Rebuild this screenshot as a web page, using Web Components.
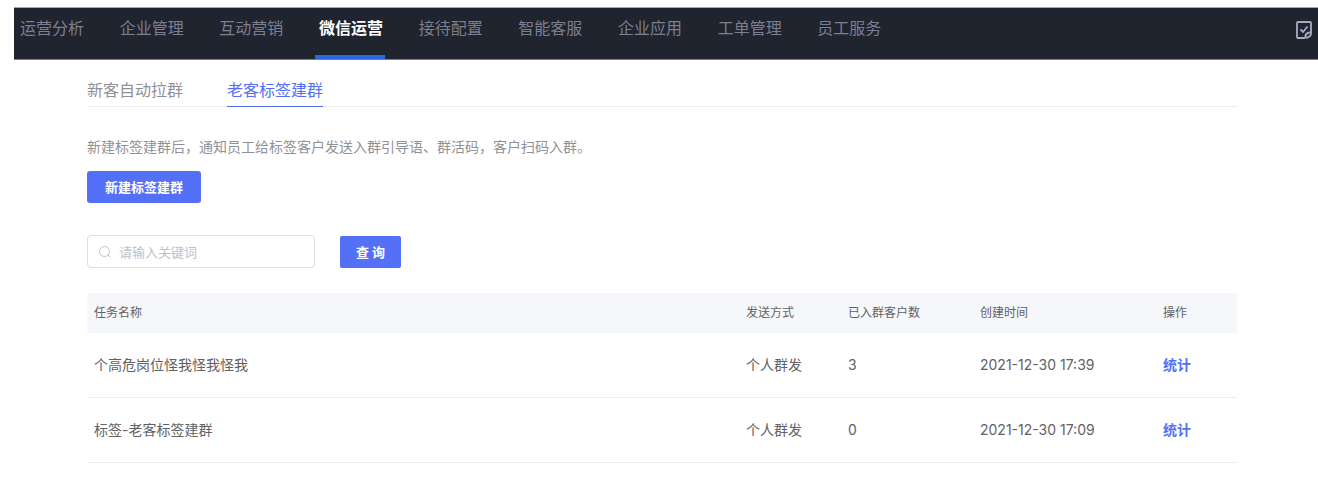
<!DOCTYPE html>
<html lang="zh-CN">
<head>
<meta charset="utf-8">
<meta name="viewport" content="width=device-width, initial-scale=1">
<title>老客标签建群</title>
<style>
  body {
    margin: 0;
    background: #fff;
    color: #606266;
    font: 14px/20px Inter, "Noto Sans CJK SC", sans-serif;
  }
</style>
</head>
<body>
<group-page></group-page>

<script>
  // barra superior
  class TopNav extends HTMLElement {
    constructor() {
      super();
      this.attachShadow({ mode: 'open' });
      this.shadowRoot.innerHTML = `
        <style>
          :host {
            display: flex;
            justify-content: space-between;
            height: 53px;
            padding: 0 5px 0 2px;
            background: #20242f;
            border-top: 1px solid #a6a7ac;
            border-bottom: 1px solid #7b7e86;
            box-sizing: border-box;
          }
          nav {
            display: grid;
            grid-template-columns: repeat(9, 1fr);
            width: 897px;
          }
          button {
            padding: 12px 0 0;
            border: 0;
            background: none;
            color: #a5acc4;
            align-self: start;
          }
          svg {
            display: block;
          }
        </style>
        <nav><slot></slot></nav>
        <button type="button" aria-label="待办"><svg width="18" height="20" viewBox="0 0 18 20" fill="none" stroke="currentColor" stroke-width="1.800" stroke-linejoin="round">
          <path d="M10 18H3Q2 18 2 17V3Q2 2 3 2H15Q16 2 16 3V13Q16 16 13.500 17Q11 18.500 10.500 17Q10 14 13 12.800Q15.500 12 16 13"/>
          <path d="M5.500 9.500L8 12L12.500 6.500"/>
        </svg></button>
      `;
    }
  }

  class NavItem extends HTMLElement {
    constructor() {
      super();
      this.attachShadow({ mode: 'open' });
      this.shadowRoot.innerHTML = `
        <style>
          :host {
            display: flex;
          }
          a {
            height: 51px;
            box-sizing: border-box;
            padding: 8px 2px 0 4px;
            border-bottom: 4px solid transparent;
            color: #7c7f91;
            font-size: 16px;
            line-height: 24px;
            white-space: nowrap;
            text-decoration: none;
          }
          :host([active]) a {
            border-color: #2b65e8;
            color: #fff;
            font-weight: 700;
          }
        </style>
        <a href="#"><slot></slot></a>
      `;
    }
  }

  class TabLink extends HTMLElement {
    constructor() {
      super();
      this.attachShadow({ mode: 'open' });
      this.shadowRoot.innerHTML = `
        <style>
          :host {
            display: block;
            margin-bottom: -1px;
          }
          a {
            display: block;
            padding-bottom: 4px;
            border-bottom: 1px solid transparent;
            color: #8f9198;
            font-size: 16px;
            line-height: 24px;
            text-decoration: none;
          }
          :host([active]) a {
            border-color: #5370f5;
            color: #5370f5;
          }
        </style>
        <a href="#"><slot></slot></a>
      `;
    }
  }

  class PrimaryButton extends HTMLElement {
    constructor() {
      super();
      this.attachShadow({ mode: 'open' });
      this.shadowRoot.innerHTML = `
        <style>
          :host {
            display: block;
          }
          button {
            display: block;
            height: 32px;
            padding: 0 18px;
            border: 0;
            border-radius: 3px;
            background: #5370f7;
            color: #fff;
            font: inherit;
            font-size: 13px;
            font-weight: 700;
            line-height: 20px;
          }
          :host([compact]) button {
            padding: 0 16px;
            border-radius: 2px;
          }
        </style>
        <button type="button"><slot></slot></button>
      `;
    }
  }

  class SearchBox extends HTMLElement {
    constructor() {
      super();
      this.attachShadow({ mode: 'open' });
      this.shadowRoot.innerHTML = `
        <style>
          :host {
            display: block;
            width: 228px;
          }
          label {
            display: flex;
            align-items: center;
            gap: 8px;
            height: 33px;
            padding: 0 10px;
            border: 1px solid #dcdfe6;
            border-radius: 4px;
            box-sizing: border-box;
            color: #c0c4cc;
          }
          input {
            flex: 1;
            min-width: 0;
            padding: 0;
            border: 0;
            outline: 0;
            background: none;
            color: #606266;
            font: inherit;
            font-size: 13px;
          }
          input::placeholder {
            color: #bdc0c9;
          }
        </style>
        <label>
          <svg width="13" height="13" viewBox="0 0 13 13" fill="none" stroke="currentColor">
            <circle cx="6.500" cy="6.500" r="5"/>
            <path d="M10 10L12 12"/>
          </svg>
          <input type="text" aria-label="关键词" placeholder="请输入关键词">
        </label>
      `;
    }
  }

  class TaskTable extends HTMLElement {
    constructor() {
      super();
      this.attachShadow({ mode: 'open' });
      this.shadowRoot.innerHTML = `
        <style>
          :host {
            display: block;
          }
          table {
            width: 100%;
            border-collapse: separate;
            border-spacing: 0;
            table-layout: fixed;
          }
          th, td {
            padding: 0 7px;
            text-align: left;
            box-sizing: border-box;
          }
          th {
            height: 40px;
            background: #f5f7fb;
            color: #606266;
            font-size: 12px;
            font-weight: 400;
          }
          td {
            height: 65px;
            border-bottom: 1px solid #ebeef5;
          }
          .mode { width: 102px; }
          .count { width: 132px; }
          .time { width: 183px; }
          .action { width: 81px; }
          a {
            color: #5370f7;
            font-weight: 700;
            text-decoration: none;
          }
        </style>
        <table>
          <thead>
            <tr>
              <th>任务名称</th>
              <th class="mode">发送方式</th>
              <th class="count">已入群客户数</th>
              <th class="time">创建时间</th>
              <th class="action">操作</th>
            </tr>
          </thead>
          <tbody></tbody>
        </table>
      `;
    }

    connectedCallback() {
      const tasks = [
        ['个高危岗位怪我怪我怪我', '个人群发', 3, '2021-12-30 17:39'],
        ['标签-老客标签建群', '个人群发', 0, '2021-12-30 17:09']
      ];
      this.shadowRoot.querySelector('tbody').innerHTML = tasks.map(task => `
        <tr>${task.map(value => `<td>${value}</td>`).join('')}<td><a href="#">统计</a></td></tr>
      `).join('');
    }
  }

  class GroupPage extends HTMLElement {
    constructor() {
      super();
      this.attachShadow({ mode: 'open' });
      this.shadowRoot.innerHTML = `
        <style>
          :host {
            display: block;
            padding: 7px 0 0 14px;
          }
          main {
            padding: 18px 81px 28px 73px;
          }
          .tabs {
            display: flex;
            gap: 44px;
            border-bottom: 1px solid #ebecef;
          }
          p {
            margin: 30px 0 14px;
            color: #8f9198;
          }
          .create {
            display: flex;
            margin-bottom: 32px;
          }
          .search {
            display: flex;
            align-items: center;
            gap: 25px;
            margin-bottom: 25px;
          }
        </style>
        <top-nav>
          <nav-item>运营分析</nav-item>
          <nav-item>企业管理</nav-item>
          <nav-item>互动营销</nav-item>
          <nav-item active>微信运营</nav-item>
          <nav-item>接待配置</nav-item>
          <nav-item>智能客服</nav-item>
          <nav-item>企业应用</nav-item>
          <nav-item>工单管理</nav-item>
          <nav-item>员工服务</nav-item>
        </top-nav>
        <main>
          <div class="tabs">
            <tab-link>新客自动拉群</tab-link>
            <tab-link active>老客标签建群</tab-link>
          </div>
          <p>新建标签建群后\uff0c通知员工给标签客户发送入群引导语、群活码\uff0c客户扫码入群。</p>
          <div class="create"><primary-button>新建标签建群</primary-button></div>
          <div class="search">
            <search-box></search-box>
            <primary-button compact>查 询</primary-button>
          </div>
          <task-table></task-table>
        </main>
      `;
    }
  }

  customElements.define('top-nav', TopNav);
  customElements.define('nav-item', NavItem);
  customElements.define('tab-link', TabLink);
  customElements.define('primary-button', PrimaryButton);
  customElements.define('search-box', SearchBox);
  customElements.define('task-table', TaskTable);
  customElements.define('group-page', GroupPage);
</script>
</body>
</html>
